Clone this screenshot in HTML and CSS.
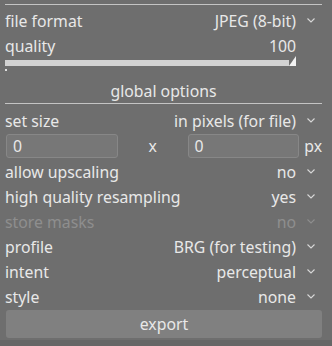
FILE: index.html
```html
<!DOCTYPE html>
<html lang="en">
<head>
    <meta charset="UTF-8">
    <title>export</title>
    <link rel="stylesheet" href="styles.css">
</head>
<body>
    <div class="panel">
        <div class="section-top"></div>

        <div class="row">
            <span class="label">file format</span>
            <span class="value">JPEG (8-bit)<svg class="chev" viewBox="0 0 8 5"><path d="M0.5 0.5 L4 4 L7.5 0.5"/></svg></span>
        </div>
        <div class="row">
            <span class="label">quality</span>
            <span class="value">100<span class="chev-space"></span></span>
        </div>
        <div class="slider">
            <div class="slider-bar"><div class="slider-tip"></div></div>
            <div class="slider-mark"></div>
        </div>

        <div class="section">global options</div>

        <div class="row">
            <span class="label">set size</span>
            <span class="value">in pixels (for file)<svg class="chev" viewBox="0 0 8 5"><path d="M0.5 0.5 L4 4 L7.5 0.5"/></svg></span>
        </div>
        <div class="size-row">
            <div class="entry">0</div>
            <span class="times">x</span>
            <div class="entry">0</div>
            <span class="unit">px</span>
        </div>
        <div class="row">
            <span class="label">allow upscaling</span>
            <span class="value">no<svg class="chev" viewBox="0 0 8 5"><path d="M0.5 0.5 L4 4 L7.5 0.5"/></svg></span>
        </div>
        <div class="row">
            <span class="label">high quality resampling</span>
            <span class="value">yes<svg class="chev" viewBox="0 0 8 5"><path d="M0.5 0.5 L4 4 L7.5 0.5"/></svg></span>
        </div>
        <div class="row disabled">
            <span class="label">store masks</span>
            <span class="value">no<svg class="chev" viewBox="0 0 8 5"><path d="M0.5 0.5 L4 4 L7.5 0.5"/></svg></span>
        </div>
        <div class="row">
            <span class="label">profile</span>
            <span class="value">BRG (for testing)<svg class="chev" viewBox="0 0 8 5"><path d="M0.5 0.5 L4 4 L7.5 0.5"/></svg></span>
        </div>
        <div class="row">
            <span class="label">intent</span>
            <span class="value">perceptual<svg class="chev" viewBox="0 0 8 5"><path d="M0.5 0.5 L4 4 L7.5 0.5"/></svg></span>
        </div>
        <div class="row">
            <span class="label">style</span>
            <span class="value">none<svg class="chev" viewBox="0 0 8 5"><path d="M0.5 0.5 L4 4 L7.5 0.5"/></svg></span>
        </div>

        <button class="export-btn">export</button>
    </div>
    <div class="bottom"></div>
</body>
</html>
```

FILE: styles.css
```css
/* Basic Styling */
html, body {
    margin: 0;
    background-color: #6e6e6e;
}

body {
    font-family: "Noto Sans", "Open Sans", sans-serif;
    font-size: 15.8px;
    color: #e8e8e8;
    height: 346px;
    overflow: hidden;
    position: relative;
}

.panel {
    padding: 0 10px 0 5px;
}

/* Section headers */
.section-top {
    height: 4px;
    border-bottom: 1px solid #c4c4c4;
    margin-bottom: 3px;
}

.section {
    height: 26px;
    line-height: 29px;
    text-align: center;
    border-bottom: 1px solid #c4c4c4;
    margin-bottom: 4px;
}

/* Rows */
.row {
    display: flex;
    justify-content: space-between;
    align-items: center;
    height: 25px;
    line-height: 24px;
    white-space: nowrap;
}

.value {
    display: flex;
    align-items: center;
}

.chev {
    width: 8px;
    height: 5px;
    margin-left: 11px;
    margin-right: 7px;
    fill: none;
    stroke: #d8d8d8;
    stroke-width: 1.1;
}

.chev-space {
    display: inline-block;
    width: 26px;
}

.disabled {
    color: #8e8e8e;
}

.disabled .chev {
    stroke: #8e8e8e;
}

/* Slider */
.slider {
    height: 17px;
    padding-top: 2px;
}

.slider-bar {
    height: 6px;
    width: 284px;
    background-color: #d2d2d2;
    position: relative;
}

.slider-tip {
    position: absolute;
    right: -7px;
    top: -4px;
    width: 0;
    height: 0;
    border-left: 7px solid transparent;
    border-bottom: 10px solid #f2f2f2;
}

.slider-mark {
    width: 2px;
    height: 2px;
    margin-top: 3px;
    background-color: #e0e0e0;
}

/* Size entries */
.size-row {
    display: flex;
    align-items: center;
    height: 26px;
    margin: 0 0 0 1px;
}

.entry {
    width: 104px;
    height: 22px;
    padding-left: 6px;
    line-height: 22px;
    background-color: #777777;
    border: 1px solid #878787;
    border-radius: 3px;
}

.times {
    width: 70px;
    text-align: center;
}

.unit {
    margin-left: 5px;
}

/* Export button */
.export-btn {
    display: block;
    width: 316px;
    height: 28px;
    margin: 1px 0 0 1px;
    font-family: inherit;
    font-size: 15.8px;
    color: #e8e8e8;
    background-color: #808080;
    border: none;
    border-radius: 3px;
}

.bottom {
    position: absolute;
    left: 0;
    top: 340px;
    width: 332px;
    height: 6px;
    background-color: #666666;
}
```
